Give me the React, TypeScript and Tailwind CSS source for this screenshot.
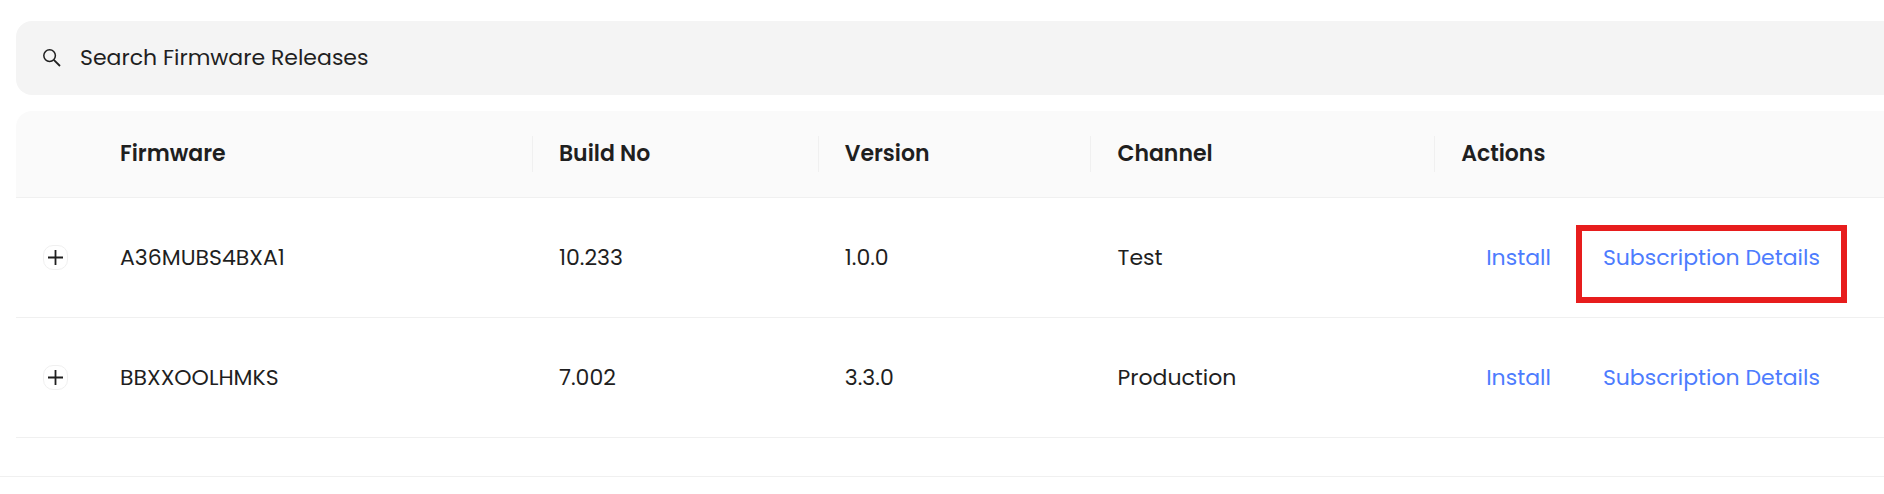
import React from 'react';

type Firmware = {
  name: string;
  buildNo: string;
  version: string;
  channel: string;
  highlighted?: boolean;
};

const columns = [
  { title: 'Firmware', width: 'w-[23.5%]' },
  { title: 'Build No', width: 'w-[15.3%]' },
  { title: 'Version', width: 'w-[14.6%]' },
  { title: 'Channel', width: 'w-[18.4%]' },
  { title: 'Actions', width: 'w-auto' },
];

const firmwares: Firmware[] = [
  { name: 'A36MUBS4BXA1', buildNo: '10.233', version: '1.0.0', channel: 'Test', highlighted: true },
  { name: 'BBXXOOLHMKS', buildNo: '7.002', version: '3.3.0', channel: 'Production' },
];

const SearchIcon = () => (
  <svg className="size-[18px] shrink-0" viewBox="0 0 18 18" fill="none" stroke="#1f1f1f" aria-hidden="true">
    <circle cx="6.6" cy="6.6" r="5.8" strokeWidth="1.5" />
    <path d="M10.8 10.8L17 17" strokeWidth="1.8" />
  </svg>
);

const SearchBar = () => (
  <label className="flex items-center gap-[19px] rounded-l-2xl bg-[#f4f4f4] py-5 pl-[27px]">
    <SearchIcon />
    <input
      type="text"
      aria-label="Search Firmware Releases"
      placeholder="Search Firmware Releases"
      className="h-[34px] min-w-0 flex-1 bg-transparent outline-none placeholder:text-[#1f1f1f]"
    />
  </label>
);

const ExpandButton = ({ name }: { name: string }) => (
  <button
    type="button"
    aria-label={`Expand ${name}`}
    className="flex size-[25px] items-center justify-center rounded-[10px] border border-[#f0f0f0] bg-white"
  >
    <svg className="size-[15px]" viewBox="0 0 15 15" stroke="#1f1f1f" strokeWidth="1.8" aria-hidden="true">
      <path d="M7.5 0V15M0 7.5H15" />
    </svg>
  </button>
);

const FirmwareTable = () => (
  <table className="w-full table-fixed border-separate border-spacing-0 text-left">
    <thead>
      <tr className="h-[87px]">
        <th aria-label="Expand" className="w-[78px] rounded-tl-2xl border-b border-[#f0f0f0] bg-[#fafafa]" />
        {columns.map((column, i) => (
          <th key={column.title} className={`${column.width} border-b border-[#f0f0f0] bg-[#fafafa] p-0 font-semibold`}>
            <div className={`flex h-9 items-center px-[26px] ${i < columns.length - 1 ? 'border-r border-[#f0f0f0]' : ''}`}>
              {column.title}
            </div>
          </th>
        ))}
      </tr>
    </thead>
    <tbody>
      {firmwares.map((f) => (
        <tr key={f.name} className="h-[120px] *:border-b *:border-[#f0f0f0]">
          <td className="pl-[27px]">
            <ExpandButton name={f.name} />
          </td>
          <td className="px-[26px]">{f.name}</td>
          <td className="px-[26px]">{f.buildNo}</td>
          <td className="px-[26px]">{f.version}</td>
          <td className="px-[26px]">{f.channel}</td>
          <td className="pl-[26px]">
            <div className="flex items-center gap-0.5 text-[#4d7cfe]">
              <button type="button" className="h-[50px] px-[25px]">Install</button>
              <button type="button" className="relative h-[50px] px-[25px] whitespace-nowrap">
                Subscription Details
                {f.highlighted && (
                  <span className="absolute -inset-x-0.5 -top-2 -bottom-5 border-6 border-[#e71d1d]" />
                )}
              </button>
            </div>
          </td>
        </tr>
      ))}
    </tbody>
  </table>
);

export default function App() {
  return (
    <main className="bg-white font-['Poppins','Inter',sans-serif] text-[22px] leading-[34px] text-[#1f1f1f]">
      <div className="flex flex-col gap-4 border-b border-[#f0f0f0] pt-[21px] pb-[38px] pl-4">
        <SearchBar />
        <FirmwareTable />
      </div>
    </main>
  );
}
